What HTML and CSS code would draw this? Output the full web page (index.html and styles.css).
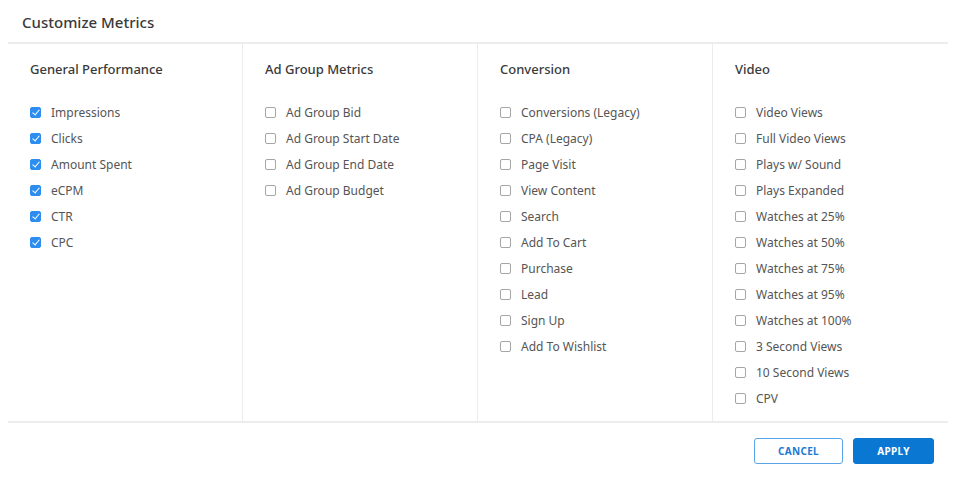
FILE: index.html
```html
<!DOCTYPE html>
<html>
<head>
<meta charset="utf-8">
<link rel="stylesheet" href="styles.css">
</head>
<body>
<div class="modal">
  <div class="header"><h1 class="title">Customize Metrics</h1></div>
  <div class="columns">
    <div class="col">
      <h2 class="col-title">General Performance</h2>
      <ul class="list">
        <li class="item"><span class="cb checked"></span>Impressions</li>
        <li class="item"><span class="cb checked"></span>Clicks</li>
        <li class="item"><span class="cb checked"></span>Amount Spent</li>
        <li class="item"><span class="cb checked"></span>eCPM</li>
        <li class="item"><span class="cb checked"></span>CTR</li>
        <li class="item"><span class="cb checked"></span>CPC</li>
      </ul>
    </div>
    <div class="col">
      <h2 class="col-title">Ad Group Metrics</h2>
      <ul class="list">
        <li class="item"><span class="cb"></span>Ad Group Bid</li>
        <li class="item"><span class="cb"></span>Ad Group Start Date</li>
        <li class="item"><span class="cb"></span>Ad Group End Date</li>
        <li class="item"><span class="cb"></span>Ad Group Budget</li>
      </ul>
    </div>
    <div class="col">
      <h2 class="col-title">Conversion</h2>
      <ul class="list">
        <li class="item"><span class="cb"></span>Conversions (Legacy)</li>
        <li class="item"><span class="cb"></span>CPA (Legacy)</li>
        <li class="item"><span class="cb"></span>Page Visit</li>
        <li class="item"><span class="cb"></span>View Content</li>
        <li class="item"><span class="cb"></span>Search</li>
        <li class="item"><span class="cb"></span>Add To Cart</li>
        <li class="item"><span class="cb"></span>Purchase</li>
        <li class="item"><span class="cb"></span>Lead</li>
        <li class="item"><span class="cb"></span>Sign Up</li>
        <li class="item"><span class="cb"></span>Add To Wishlist</li>
      </ul>
    </div>
    <div class="col">
      <h2 class="col-title">Video</h2>
      <ul class="list">
        <li class="item"><span class="cb"></span>Video Views</li>
        <li class="item"><span class="cb"></span>Full Video Views</li>
        <li class="item"><span class="cb"></span>Plays w/ Sound</li>
        <li class="item"><span class="cb"></span>Plays Expanded</li>
        <li class="item"><span class="cb"></span>Watches at 25%</li>
        <li class="item"><span class="cb"></span>Watches at 50%</li>
        <li class="item"><span class="cb"></span>Watches at 75%</li>
        <li class="item"><span class="cb"></span>Watches at 95%</li>
        <li class="item"><span class="cb"></span>Watches at 100%</li>
        <li class="item"><span class="cb"></span>3 Second Views</li>
        <li class="item"><span class="cb"></span>10 Second Views</li>
        <li class="item"><span class="cb"></span>CPV</li>
      </ul>
    </div>
  </div>
  <div class="footer">
    <button class="btn btn-outline">CANCEL</button>
    <button class="btn btn-primary">APPLY</button>
  </div>
</div>
</body>
</html>
```

FILE: styles.css
```css
* { box-sizing: border-box; }
html, body { margin: 0; padding: 0; background: #fff; }
body {
  font-family: "Noto Sans", "Open Sans", sans-serif;
  color: #4a4a4a;
  width: 964px;
  height: 487px;
  overflow: hidden;
}
.modal { margin: 0 16px 0 8px; }
.header {
  height: 44px;
  border-bottom: 2px solid #ededed;
  display: flex;
  align-items: center;
  padding-left: 14px;
  padding-top: 1px;
}
.title {
  margin: 0;
  font-size: 15px;
  font-weight: 500;
  color: #3a3a3a;
}
.columns {
  display: grid;
  grid-template-columns: repeat(4, 1fr);
  height: 379px;
  border-bottom: 2px solid #ededed;
}
.col {
  border-right: 1px solid #ececec;
  padding: 16px 0 0 22px;
}
.col:last-child { border-right: none; }
.col-title {
  margin: 0;
  font-size: 13px;
  font-weight: 500;
  color: #3a3a3a;
  line-height: 18px;
  height: 39px;
}
.list { list-style: none; margin: 0; padding: 0; }
.item {
  display: flex;
  align-items: center;
  height: 26px;
  font-size: 12px;
  color: #555;
}
.cb {
  width: 11px;
  height: 11px;
  border: 1px solid #a6a6a6;
  border-radius: 2px;
  margin-right: 10px;
  flex: none;
  position: relative;
  background: #fff;
}
.cb.checked {
  background: #2d8ef0;
  border-color: #2d8ef0;
}
.cb.checked::after {
  content: "";
  position: absolute;
  left: 3px;
  top: 0.5px;
  width: 3px;
  height: 6px;
  border: solid #fff;
  border-width: 0 1.5px 1.5px 0;
  transform: rotate(40deg);
}
.footer {
  display: flex;
  justify-content: flex-end;
  gap: 10px;
  padding: 15px 14px 0 0;
}
.btn {
  height: 26px;
  border-radius: 3px;
  font-family: "Noto Sans", "Open Sans", sans-serif;
  font-size: 10px;
  font-weight: 700;
  letter-spacing: 0.3px;
  cursor: pointer;
}
.btn-outline {
  width: 89px;
  background: #fff;
  color: #1a7ad4;
  border: 1px solid #5aa4e6;
}
.btn-primary {
  width: 81px;
  background: #0a78d2;
  color: #fff;
  border: 1px solid #0a78d2;
}
```
